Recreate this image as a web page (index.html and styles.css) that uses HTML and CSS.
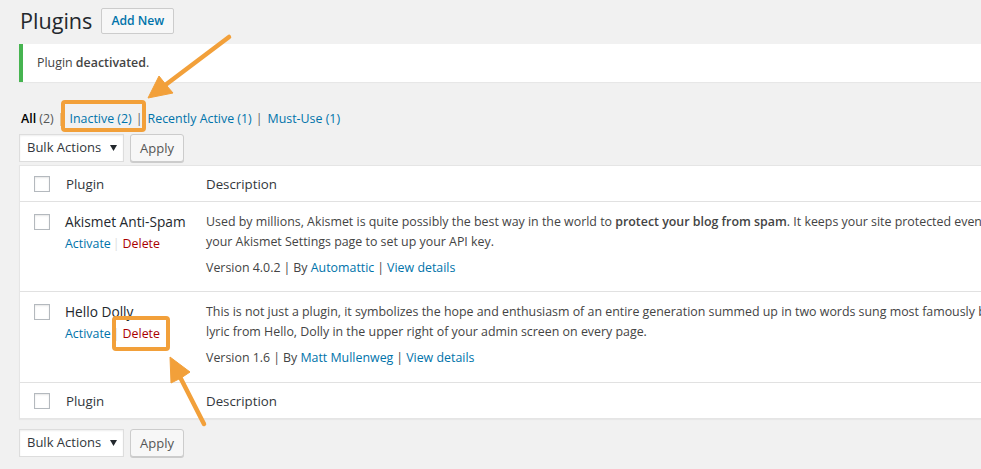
FILE: index.html
```html
<!DOCTYPE html>
<html lang="en">
<head>
<meta charset="utf-8">
<title>Plugins</title>
<link rel="stylesheet" href="styles.css">
</head>
<body>
<div class="page">
  <div class="wrap">
    <div class="head">
      <h1 class="title">Plugins</h1>
      <a class="add-new">Add New</a>
    </div>

    <div class="notice"><p>Plugin <strong>deactivated</strong>.</p></div>

    <ul class="filters">
      <li><a class="current">All <span class="count">(2)</span></a><span class="sep">|</span></li>
      <li><a class="link">Inactive <span class="count">(2)</span></a><span class="sep">|</span></li>
      <li><a class="link">Recently Active <span class="count">(1)</span></a><span class="sep">|</span></li>
      <li><a class="link">Must-Use <span class="count">(1)</span></a></li>
    </ul>

    <div class="tablenav">
      <div class="select">Bulk Actions<svg class="caret" width="7" height="6" viewBox="0 0 7 6"><path d="M0 0h7L3.5 6z" fill="#23282d"/></svg></div>
      <button class="button">Apply</button>
    </div>

    <div class="table">
      <div class="tr thead">
        <div class="cb"><span class="checkbox"></span></div>
        <div class="th">Plugin</div>
        <div class="th">Description</div>
      </div>

      <div class="tr row">
        <div class="cb cb-row"><span class="checkbox"></span></div>
        <div class="name">
          <div class="plugin-title">Akismet Anti-Spam</div>
          <div class="actions"><a class="act">Activate</a><span class="asep">|</span><a class="del">Delete</a></div>
        </div>
        <div class="desc">
          <p class="line">Used by millions, Akismet is quite possibly the best way in the world to <strong>protect your blog from spam</strong>. It keeps your site protected even while you sleep. To get started: activate the Akismet plugin and then go to</p>
          <p class="line">your Akismet Settings page to set up your API key.</p>
          <p class="meta">Version 4.0.2<span class="msep">|</span>By <a class="link">Automattic</a><span class="msep">|</span><a class="link">View details</a></p>
        </div>
      </div>

      <div class="tr row">
        <div class="cb cb-row"><span class="checkbox"></span></div>
        <div class="name">
          <div class="plugin-title">Hello Dolly</div>
          <div class="actions"><a class="act">Activate</a><span class="asep">|</span><a class="del">Delete</a></div>
        </div>
        <div class="desc">
          <p class="line">This is not just a plugin, it symbolizes the hope and enthusiasm of an entire generation summed up in two words sung most famously by Louis Armstrong: Hello, Dolly. When activated you will randomly see a</p>
          <p class="line">lyric from Hello, Dolly in the upper right of your admin screen on every page.</p>
          <p class="meta">Version 1.6<span class="msep">|</span>By <a class="link">Matt Mullenweg</a><span class="msep">|</span><a class="link">View details</a></p>
        </div>
      </div>

      <div class="tr tfoot">
        <div class="cb"><span class="checkbox"></span></div>
        <div class="th">Plugin</div>
        <div class="th">Description</div>
      </div>
    </div>

    <div class="tablenav bottom">
      <div class="select">Bulk Actions<svg class="caret" width="7" height="6" viewBox="0 0 7 6"><path d="M0 0h7L3.5 6z" fill="#23282d"/></svg></div>
      <button class="button">Apply</button>
    </div>
  </div>

  <svg class="annot" width="981" height="469" viewBox="0 0 981 469">
    <g fill="none" stroke="#f2a03a" stroke-width="4" stroke-linejoin="round">
      <rect x="63" y="102" width="81" height="28" rx="2"/>
      <rect x="114" y="318" width="54" height="31" rx="2"/>
    </g>
    <g stroke="#f2a03a" stroke-width="4.5" stroke-linecap="round" fill="#f2a03a">
      <line x1="229" y1="37" x2="164" y2="86"/>
      <line x1="204" y1="424" x2="179" y2="375"/>
    </g>
    <g fill="#f2a03a" stroke="#f2a03a" stroke-width="1" stroke-linejoin="round">
      <polygon points="148,98 159,76 167,86 173,93"/>
      <polygon points="170,357 190,372 181,378 171,383"/>
    </g>
  </svg>
</div>
</body>
</html>
```

FILE: styles.css
```css
* {
  box-sizing: border-box;
  margin: 0;
  padding: 0;
}

html,
body {
  overflow: hidden;
}

body {
  background: #f1f1f1;
  font-family: "Open Sans", "Noto Sans", sans-serif;
  font-size: 12.4px;
  line-height: 1.5;
  color: #444;
}

a {
  text-decoration: none;
}

.page {
  position: relative;
  width: 981px;
  height: 469px;
  overflow: hidden;
}

.wrap {
  width: 1400px;
  padding-left: 19px;
}

/* header */
.head {
  display: flex;
  align-items: center;
  height: 26px;
  margin-top: 8px;
  padding-left: 1px;
}

.title {
  font-size: 21.6px;
  font-weight: 400;
  line-height: 26px;
  color: #23282d;
}

.add-new {
  display: flex;
  align-items: center;
  height: 26px;
  margin-left: 9px;
  padding: 0 9px;
  border: 1px solid #ccc;
  border-radius: 2px;
  background: #f7f7f7;
  color: #0073aa;
  font-size: 12.2px;
  font-weight: 600;
}

/* notice */
.notice {
  height: 38px;
  margin-top: 10px;
  padding: 9px 14px 0;
  background: #fff;
  border-left: 4px solid #46b450;
  box-shadow: 0 1px 1px rgba(0, 0, 0, .04);
}

.notice p {
  line-height: 19.5px;
  color: #444;
}

.notice strong {
  font-weight: 600;
}

/* filters */
.filters {
  display: flex;
  list-style: none;
  margin-top: 27px;
  padding-left: 2px;
  line-height: 20px;
  color: #555;
  white-space: pre;
}

.filters .current {
  color: #000;
  font-weight: 600;
}

.filters .current .count {
  color: #555;
  font-weight: 400;
}

.link {
  color: #0073aa;
}

.sep {
  padding: 0 5px 0 4px;
  color: #666;
}

/* tablenav */
.tablenav {
  display: flex;
  gap: 6px;
  height: 28px;
  margin-top: 5px;
}

.tablenav.bottom {
  margin-top: 10px;
}

.select {
  display: flex;
  align-items: center;
  justify-content: space-between;
  width: 105px;
  height: 28px;
  padding: 0 6px 0 7px;
  background: #fff;
  border: 1px solid #ddd;
  box-shadow: inset 0 1px 2px rgba(0, 0, 0, .07);
  color: #32373c;
  font-size: 13px;
}

.caret {
  margin-top: -1px;
}

.button {
  width: 54px;
  height: 28px;
  padding: 0;
  background: #f7f7f7;
  border: 1px solid #ccc;
  border-radius: 3px;
  box-shadow: 0 1px 0 #ccc;
  color: #555;
  font-family: inherit;
  font-size: 13px;
  line-height: 26px;
}

/* table */
.table {
  margin-top: 3px;
  background: #fff;
  border: 1px solid #e5e5e5;
  box-shadow: 0 1px 1px rgba(0, 0, 0, .04);
}

.tr {
  display: grid;
  grid-template-columns: 45px 141px 1fr;
}

.thead {
  height: 36px;
  border-bottom: 1px solid #e1e1e1;
}

.tfoot {
  height: 36px;
  border-top: 1px solid #e1e1e1;
}

.row {
  height: 89px;
}

.row + .row {
  height: 91px;
  border-top: 1px solid #e1e1e1;
}

.cb {
  padding: 10px 0 0 14px;
}

.cb-row {
  padding-top: 12px;
}

.checkbox {
  display: block;
  width: 16px;
  height: 16px;
  background: #fff;
  border: 1px solid #b4b9be;
  box-shadow: inset 0 1px 2px rgba(0, 0, 0, .1);
}

.th {
  padding: 8px 0 0 1px;
  font-size: 13.3px;
  line-height: 20px;
  color: #32373c;
}

.th + .th {
  padding-left: 0;
}

.name {
  padding-top: 10px;
}

.plugin-title {
  font-size: 13.7px;
  line-height: 20px;
  color: #23282d;
}

.actions {
  margin-top: 2px;
  line-height: 20px;
  white-space: nowrap;
}

.act {
  color: #0073aa;
}

.asep {
  margin: 0 3px 0 2px;
  color: #ddd;
}

.del {
  color: #a00;
}

.desc {
  padding-top: 10px;
  color: #444;
}

.line {
  line-height: 19.5px;
  white-space: nowrap;
}

.line strong {
  font-weight: 600;
}

.meta {
  margin-top: 7px;
  line-height: 19.5px;
  white-space: nowrap;
}

.msep {
  margin: 0 3px;
}

/* annotation layer */
.annot {
  position: absolute;
  left: 0;
  top: 0;
  pointer-events: none;
}
```
